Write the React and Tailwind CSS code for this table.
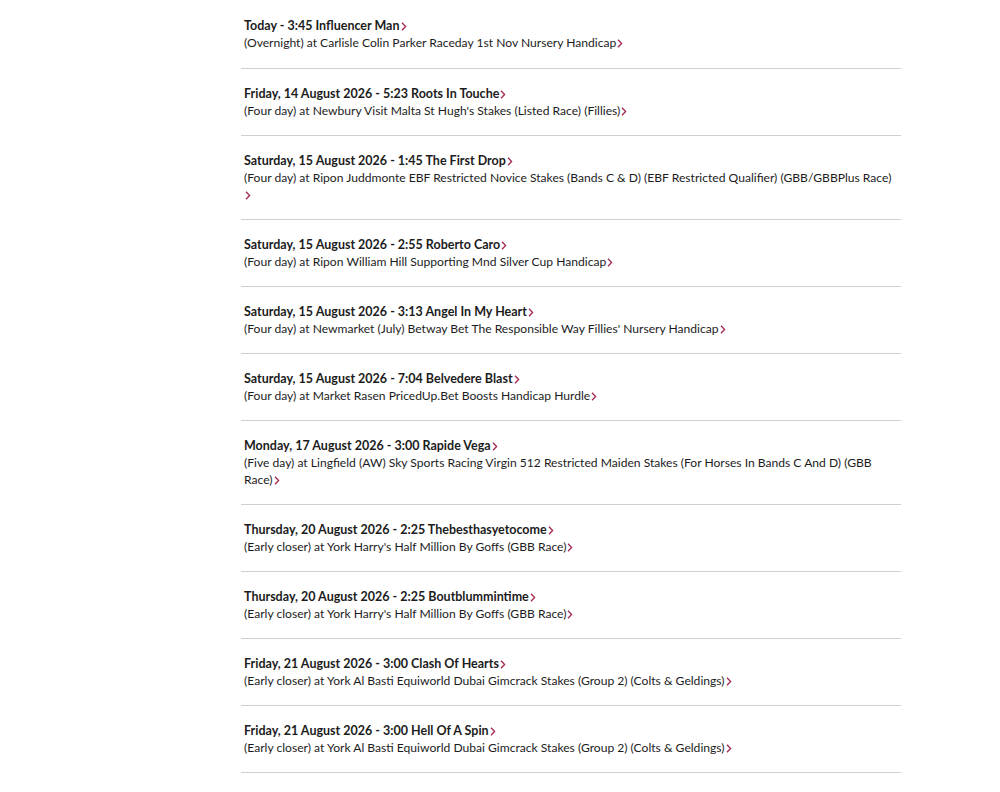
import React from "react";

const rows = [
  ["Today - 3:45 Influencer Man", "(Overnight) at Carlisle Colin Parker Raceday 1st Nov Nursery Handicap"],
  ["Friday, 14 August 2026 - 5:23 Roots In Touche", "(Four day) at Newbury Visit Malta St Hugh's Stakes (Listed Race) (Fillies)"],
  ["Saturday, 15 August 2026 - 1:45 The First Drop", "(Four day) at Ripon Juddmonte EBF Restricted Novice Stakes (Bands C & D) (EBF Restricted Qualifier) (GBB/GBBPlus Race)"],
  ["Saturday, 15 August 2026 - 2:55 Roberto Caro", "(Four day) at Ripon William Hill Supporting Mnd Silver Cup Handicap"],
  ["Saturday, 15 August 2026 - 3:13 Angel In My Heart", "(Four day) at Newmarket (July) Betway Bet The Responsible Way Fillies' Nursery Handicap"],
  ["Saturday, 15 August 2026 - 7:04 Belvedere Blast", "(Four day) at Market Rasen PricedUp.Bet Boosts Handicap Hurdle"],
  ["Monday, 17 August 2026 - 3:00 Rapide Vega", "(Five day) at Lingfield (AW) Sky Sports Racing Virgin 512 Restricted Maiden Stakes (For Horses In Bands C And D) (GBB Race)"],
  ["Thursday, 20 August 2026 - 2:25 Thebesthasyetocome", "(Early closer) at York Harry's Half Million By Goffs (GBB Race)"],
  ["Thursday, 20 August 2026 - 2:25 Boutblummintime", "(Early closer) at York Harry's Half Million By Goffs (GBB Race)"],
  ["Friday, 21 August 2026 - 3:00 Clash Of Hearts", "(Early closer) at York Al Basti Equiworld Dubai Gimcrack Stakes (Group 2) (Colts & Geldings)"],
  ["Friday, 21 August 2026 - 3:00 Hell Of A Spin", "(Early closer) at York Al Basti Equiworld Dubai Gimcrack Stakes (Group 2) (Colts & Geldings)"],
];

function Chevron() {
  return (
    <svg
      width="6"
      height="9"
      viewBox="0 0 6 9"
      className="inline-block align-[-1px] ml-px"
      fill="none"
      stroke="#a3284f"
      strokeWidth="1.3"
    >
      <path d="M1 0.8 L4.6 4.5 L1 8.2" />
    </svg>
  );
}

export default function App() {
  return (
    <div className="min-h-[792px] bg-white pt-px text-[#1c1c1c]" style={{ fontFamily: "Lato, 'Liberation Sans', sans-serif" }}>
      <ul className="ml-[241px] w-[660px]">
        {rows.map(([title, desc], i) => (
          <li key={i} className="border-b border-[#cfcfcf] pl-[3px] pr-[8px] pt-4 pb-4 first:pb-[17px] leading-[17px]">
            <div className="font-bold text-[12.5px]">
              <a href="#" className="text-[#1c1c1c]">{title}<Chevron /></a>
            </div>
            <div className="text-[12.1px]">
              <a href="#" className="text-[#1c1c1c]">{desc}<Chevron /></a>
            </div>
          </li>
        ))}
      </ul>
    </div>
  );
}
